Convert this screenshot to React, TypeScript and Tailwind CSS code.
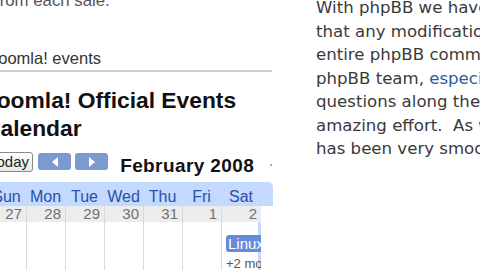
const days = ['Sun', 'Mon', 'Tue', 'Wed', 'Thu', 'Fri', 'Sat'];
const dates = ['27', '28', '29', '30', '31', '1', '2'];

function NavButton({ dir }: { dir: 'prev' | 'next' }) {
  return (
    <button className="mt-[1px] flex h-[17px] w-[33px] items-center justify-center rounded-[3px] bg-[#7b9bcf]">
      <svg width="8" height="10" viewBox="0 0 8 10">
        {dir === 'prev' ? <polygon points="7,0 7,10 1,5" fill="#fff" /> : <polygon points="1,0 1,10 7,5" fill="#fff" />}
      </svg>
    </button>
  );
}

export default function App() {
  return (
    <div className="flex h-[270px] w-[480px] overflow-hidden bg-white">
      {/* left column: events widget */}
      <div className="flex w-[272px] shrink-0 flex-col font-['Liberation_Sans',Arial,sans-serif]">
        <p className="-mt-[9px] -ml-[5px] whitespace-nowrap text-[16.8px] leading-[20px] text-[#555]">from each sale.</p>
        <h3 className="mt-[37px] -ml-[10px] whitespace-nowrap text-[16.5px] leading-[20px] text-[#333]">Joomla! events</h3>
        <div className="mt-[2px] h-[2px] bg-[#cfcfcf]" />
        <h2 className="mt-[14px] -ml-[16px] whitespace-nowrap text-[22.8px] font-bold leading-[28px] text-[#111]">
          Joomla! Official Events
          <br />
          Calendar
        </h2>

        <div className="mt-[10px] -ml-[16px] flex h-[21px] items-start whitespace-nowrap">
          <button className="h-[20px] w-[54px] rounded-[3px] border border-[#8a8a8a] bg-gradient-to-b from-white to-[#e8e8e8] pl-[4px] text-left text-[15px] leading-[18px] text-[#222]">
            Today
          </button>
          <div className="ml-[5px] flex gap-[4px]">
            <NavButton dir="prev" />
            <NavButton dir="next" />
          </div>
          <span className="mt-[3px] ml-[12px] text-[19px] font-bold leading-[21px] tracking-[0.4px] text-[#111]">February 2008</span>
          <span className="mt-[12px] ml-[16px] h-[2px] w-[2px] bg-[#aaa]" />
        </div>

        {/* calendar grid */}
        <div className="mt-[9px] -ml-[13px] w-[286px]">
          <div className="grid h-[24px] grid-cols-[39px_39px_39px_39px_39px_39px_40px_13px] rounded-tr-[5px] bg-[#c3d9ff] pt-[5px] text-[16px] leading-[20px] text-[#2c4fa8]">
            {days.map((d) => (
              <div key={d} className="text-center">{d}</div>
            ))}
          </div>
          <div className="flex">
            <div className="grid w-[274px] grid-cols-[39px_39px_39px_39px_39px_39px_40px] border-r-[3px] border-[#c3d9ff]">
              {dates.map((n, i) => (
                <div key={n} className={`flex h-[64px] flex-col overflow-hidden ${i > 0 ? 'border-l border-[#d9d9d9]' : ''}`}>
                  <div className="h-[16px] bg-[#ececec] pr-[4px] text-right text-[15px] leading-[16px] text-[#707070]">{n}</div>
                  {i === 6 && (
                    <>
                      <div className="mt-[13px] ml-[4px] h-[17px] w-[44px] shrink-0 whitespace-nowrap rounded-[3px] bg-[#668cd9] pl-[2px] text-[15px] leading-[17px] text-white">
                        Linux
                      </div>
                      <div className="mt-[5px] ml-[4px] whitespace-nowrap text-[13px] leading-[14px] text-[#555]">+2 more</div>
                    </>
                  )}
                </div>
              ))}
            </div>
          </div>
        </div>
      </div>

      {/* right column: article text */}
      <div className="ml-[44px] -mt-[4px] whitespace-nowrap font-['DejaVu_Sans',Verdana,sans-serif] text-[16.6px] leading-[23.5px] text-[#3a3a3a]">
        With phpBB we have
        <br />
        that any modification
        <br />
        entire phpBB community
        <br />
        phpBB team, <span className="text-[#2e5b9e]">especially</span>
        <br />
        questions along the way
        <br />
        amazing effort.&nbsp; As we
        <br />
        has been very smooth
      </div>
    </div>
  );
}
